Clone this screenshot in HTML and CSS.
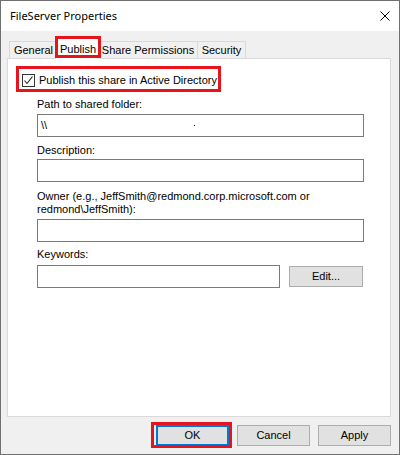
FILE: index.html
```html
<!DOCTYPE html>
<html>
<head>
<meta charset="utf-8">
<link rel="stylesheet" href="styles.css">
</head>
<body>
<div class="window">
  <div class="titlebar">
    <span class="title">FileServer Properties</span>
    <svg class="close" width="10" height="10" viewBox="0 0 10 10"><path d="M0.5 0.5 L9.5 9.5 M9.5 0.5 L0.5 9.5" stroke="#000" stroke-width="1" fill="none"/></svg>
  </div>
  <div class="body">
    <div class="tabs">
      <div class="tab t-general">General</div>
      <div class="tab t-publish selected">Publish</div>
      <div class="tab t-share">Share Permissions</div>
      <div class="tab t-security">Security</div>
    </div>
    <div class="panel">
      <div class="pubrow">
        <span class="checkbox"><svg width="11" height="11" viewBox="0 0 11 11"><path d="M1.5 5.5 L4 8.5 L9.5 1.5" stroke="#222" stroke-width="1.1" fill="none"/></svg></span>
        <span class="pubtext">Publish this share in Active Directory</span>
      </div>
      <div class="label l-path">Path to shared folder:</div>
      <div class="field f-path"><span class="val">\\</span><span class="dot"></span></div>
      <div class="label l-desc">Description:</div>
      <div class="field f-desc"></div>
      <div class="label l-owner">Owner (e.g., JeffSmith@redmond.corp.microsoft.com or<br>redmond\JeffSmith):</div>
      <div class="field f-owner"></div>
      <div class="label l-kw">Keywords:</div>
      <div class="kwrow">
        <div class="field f-kw"></div>
        <div class="btn edit">Edit...</div>
      </div>
    </div>
    <div class="buttons">
      <div class="btn ok">OK</div>
      <div class="btn">Cancel</div>
      <div class="btn">Apply</div>
    </div>
  </div>
</div>
</body>
</html>
```
FILE: styles.css
```css
html, body {
  margin: 0;
  padding: 0;
  background: #f0f0f0;
}
.window {
  width: 400px;
  height: 455px;
  box-sizing: border-box;
  border: 1px solid #707070;
  display: flex;
  flex-direction: column;
  background: #f0f0f0;
  font-family: "Liberation Sans", Arial, sans-serif;
  font-size: 11px;
  color: #000;
}
.titlebar {
  height: 30px;
  flex: none;
  background: #fff;
  display: flex;
  align-items: center;
  justify-content: space-between;
  padding: 0 9px 0 9px;
}
.title {
  font-family: "Noto Sans", "Open Sans", sans-serif;
  font-size: 11px;
  margin-top: -1px;
}
.close {
  display: block;
  margin-top: 0px;
}
.body {
  flex: 1;
  padding: 0 8px 0 6px;
  display: flex;
  flex-direction: column;
}
.tabs {
  height: 27px;
  display: flex;
  align-items: flex-end;
  padding-left: 2px;
  position: relative;
  z-index: 2;
}
.tab {
  box-sizing: border-box;
  height: 17px;
  border: 1px solid #d9d9d9;
  border-bottom: none;
  background: #f0f0f0;
  display: flex;
  align-items: center;
  justify-content: center;
  margin-left: -1px;
  line-height: 13px;
  padding-top: 1px;
}
.t-general { width: 49px; margin-left: 0; }
.t-publish { width: 46px; margin-left: -3px; margin-right: -2px; }
.t-share { width: 100px; }
.t-security { width: 49px; }
.tab.selected {
  height: 21px;
  margin-bottom: -1px;
  background: #fff;
  position: relative;
  z-index: 3;
  align-items: flex-start;
  padding-top: 4px;
}
.tab.selected::after {
  content: "";
  position: absolute;
  left: -1px;
  right: -1px;
  top: -3px;
  bottom: 1px;
  border: 3px solid #e8141c;
}
.panel {
  height: 359px;
  box-sizing: border-box;
  background: #fff;
  border: 1px solid #d9d9d9;
  padding-left: 29px;
  position: relative;
  z-index: 1;
}
.pubrow {
  box-sizing: border-box;
  width: 205px;
  height: 26px;
  margin: 7px 0 0 -21px;
  border: 3px solid #e8141c;
  display: flex;
  align-items: center;
  padding: 3px 0 0 3px;
}
.checkbox {
  box-sizing: border-box;
  width: 13px;
  height: 13px;
  border: 1px solid #333;
  background: #fff;
  display: flex;
  align-items: center;
  justify-content: center;
  flex: none;
}
.checkbox svg { display: block; }
.pubtext {
  margin-left: 4px;
  line-height: 13px;
}
.label {
  line-height: 13px;
}
.field {
  box-sizing: border-box;
  width: 327px;
  height: 23px;
  border: 1px solid #7a7a7a;
  background: #fff;
  display: flex;
  align-items: center;
  padding-left: 3px;
}
.l-path { margin-top: 6px; }
.f-path { margin-top: 3px; }
.l-desc { margin-top: 7px; }
.f-desc { margin-top: 2px; }
.l-owner { margin-top: 8px; }
.f-owner { margin-top: 3px; }
.l-kw { margin-top: 6px; }
.kwrow {
  margin-top: 4px;
  display: flex;
  align-items: center;
  gap: 9px;
}
.f-kw { width: 243px; }
.val { line-height: 13px; }
.dot {
  width: 1px;
  height: 1px;
  background: #000;
  margin-left: 147px;
  margin-top: -1px;
}
.btn {
  box-sizing: border-box;
  width: 73px;
  height: 21px;
  background: #e1e1e1;
  border: 1px solid #adadad;
  display: flex;
  align-items: center;
  justify-content: center;
  line-height: 13px;
}
.btn.edit {
  width: 74px;
  height: 21px;
}
.buttons {
  display: flex;
  justify-content: flex-end;
  gap: 8px;
  margin-top: 8px;
}
.btn.ok {
  border: 1px solid #0078d7;
  box-shadow: inset 0 0 0 1px #0078d7;
  position: relative;
}
.btn.ok::after {
  content: "";
  position: absolute;
  left: -6px;
  top: -4px;
  right: -4px;
  bottom: -3px;
  border: 3px solid #e8141c;
}
```
